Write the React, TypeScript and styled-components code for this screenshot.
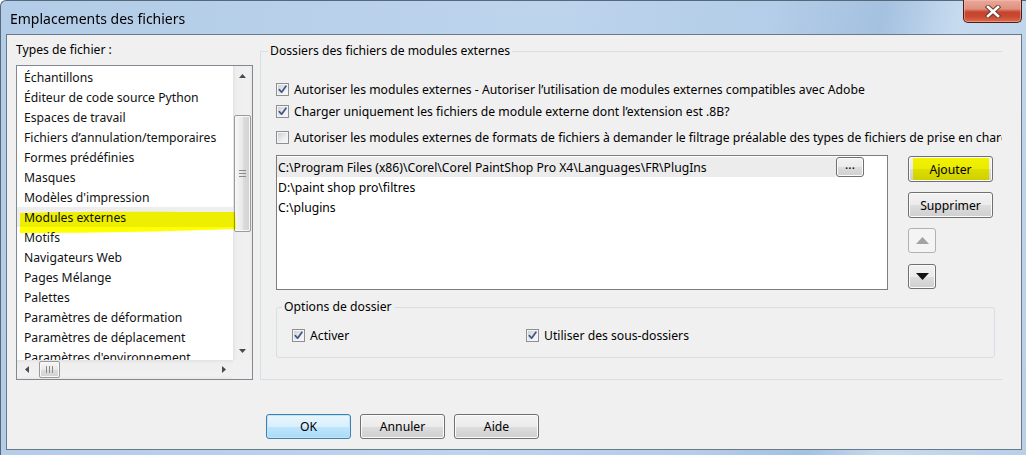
import React from "react";
import styled, { createGlobalStyle, css } from "styled-components";

const FONT = `"Noto Sans", "Liberation Sans", sans-serif`;

const GlobalStyle = createGlobalStyle`
  html, body { margin: 0; padding: 0; }
  body {
    width: 1026px; height: 455px; overflow: hidden;
    font-family: ${FONT}; font-size: 12.2px; color: #000;
  }
  * { box-sizing: border-box; }
`;

const Window = styled.div`
  width: 1026px;
  height: 455px;
  display: flex;
  flex-direction: column;
  border-left: 1px solid #56687c;
  border-top: 1px solid #56687c;
  border-top-left-radius: 6px;
  background: linear-gradient(100deg, #b3cce7 0%, #bcd4ec 50%, #b4cde8 70%, #a4c1e0 80%, #c7dbef 87%, #b7cfe9 100%);
`;

const TitleBar = styled.div`
  height: 33px;
  display: flex;
  align-items: flex-start;
  padding-left: 9px;
`;

const Title = styled.div`
  padding-top: 8px;
  font-size: 14px;
  line-height: 20px;
  color: #000;
`;

const CloseButton = styled.div`
  margin: -1px 4px 0 auto;
  width: 59px;
  height: 23px;
  border: 1px solid #4a1e16;
  border-top: none;
  border-radius: 0 0 5px 5px;
  background: linear-gradient(#eaa898 0%, #de9280 40%, #c8432d 55%, #c94a31 75%, #dc6c4c 100%);
  box-shadow: inset 0 0 0 1px rgba(255, 200, 190, 0.45);
  display: flex;
  align-items: center;
  justify-content: center;
`;

const Client = styled.div`
  flex: 1;
  margin: 0 4px 5px 5px;
  border: 1px solid #6b7888;
  background: #f0f0f0;
  display: flex;
  flex-direction: column;
`;

const TopRow = styled.div`
  display: flex;
  padding: 7px 0 0 9px;
`;

const LeftCol = styled.div`
  width: 237px;
  display: flex;
  flex-direction: column;
`;

const SectionLabel = styled.div`
  height: 16px;
  line-height: 16px;
  margin-bottom: 7px;
`;

const ListBox = styled.div`
  position: relative;
  height: 315px;
  border: 1px solid #828790;
  background: #fff;
  display: grid;
  grid-template-columns: 1fr 19px;
  grid-template-rows: 1fr 19px;
  overflow: hidden;
`;

const ItemList = styled.div`
  overflow: hidden;
  padding-top: 1px;
`;

const Item = styled.div<{ $selected?: boolean }>`
  height: 20px;
  line-height: 20px;
  padding: 1px 0 0 7px;
  white-space: nowrap;
  color: #111;
  background: ${(p) => (p.$selected ? "#eeeeee" : "transparent")};
`;

const Marker = styled.svg`
  position: absolute;
  left: 0;
  top: 0;
  width: 235px;
  height: 200px;
  mix-blend-mode: multiply;
  pointer-events: none;
`;

const VScroll = styled.div`
  grid-column: 2;
  grid-row: 1;
  display: flex;
  flex-direction: column;
  align-items: center;
  background: linear-gradient(90deg, #e2e2e2 0%, #eeeeee 15%, #f1f1f1 85%, #e8e8e8 100%);
`;

const HScroll = styled.div`
  grid-column: 1;
  grid-row: 2;
  display: flex;
  align-items: center;
  background: linear-gradient(#e2e2e2 0%, #eeeeee 15%, #f1f1f1 85%, #e8e8e8 100%);
`;

const Corner = styled.div`
  grid-column: 2;
  grid-row: 2;
  background: #f0f0f0;
`;

const ArrowCell = styled.div<{ $h?: boolean }>`
  ${(p) =>
    p.$h
      ? css`
          width: 19px;
          height: 100%;
        `
      : css`
          width: 100%;
          height: 19px;
        `}
  display: flex;
  align-items: center;
  justify-content: center;
  flex-shrink: 0;
`;

const VThumb = styled.div`
  margin-top: 30px;
  width: 17px;
  height: 117px;
  border: 1px solid #9a9a9a;
  border-radius: 2px;
  background: linear-gradient(90deg, #f6f6f6 0%, #e9e9e9 50%, #dcdcdc 51%, #d2d2d2 100%);
  box-shadow: inset 0 0 0 1px #f8f8f8;
  display: flex;
  align-items: center;
  justify-content: center;
`;

const HThumb = styled.div`
  margin-left: 3px;
  width: 21px;
  height: 17px;
  border: 1px solid #9a9a9a;
  border-radius: 2px;
  background: linear-gradient(#f6f6f6 0%, #e9e9e9 50%, #dcdcdc 51%, #d2d2d2 100%);
  box-shadow: inset 0 0 0 1px #f8f8f8;
  display: flex;
  align-items: center;
  justify-content: center;
`;

const Spacer = styled.div`
  flex: 1;
`;

const Group = styled.div<{ $w: number; $h: number }>`
  position: relative;
  width: ${(p) => p.$w}px;
  height: ${(p) => p.$h}px;
  border: 1px solid #d5dfe5;
`;

const MainGroup = styled(Group)`
  margin: 9px 0 0 7px;
  border-right: none;
  padding: 26px 0 0 15px;
`;

const OptionsGroup = styled(Group)`
  margin-top: 17px;
  border-radius: 3px;
  padding: 16px 0 0 15px;
  display: grid;
  grid-template-columns: 234px 1fr;
`;

const Legend = styled.span<{ $left: number }>`
  position: absolute;
  top: -9px;
  left: ${(p) => p.$left}px;
  padding: 0 2px;
  line-height: 16px;
  background: #f0f0f0;
  white-space: nowrap;
`;

const CheckRow = styled.label<{ $mt?: number }>`
  display: flex;
  align-items: center;
  gap: 5px;
  height: 22px;
  margin-top: ${(p) => p.$mt ?? 0}px;
  white-space: nowrap;
  overflow: hidden;
`;

const Box = styled.span`
  width: 13px;
  height: 13px;
  flex-shrink: 0;
  border: 1px solid #8e8f8f;
  background: linear-gradient(135deg, #c9ccd1 0%, #eceef0 60%, #fafafa 100%);
  box-shadow: inset 0 0 0 1px #f4f4f4;
  display: flex;
  align-items: center;
  justify-content: center;
`;

const PathArea = styled.div`
  display: flex;
  margin-top: 7px;
`;

const PathList = styled.div`
  width: 612px;
  height: 135px;
  border: 1px solid #7d7d7d;
  background: #fff;
  padding-top: 1px;
`;

const PathRow = styled.div`
  height: 20px;
  display: flex;
  align-items: center;
`;

const PathText = styled.div<{ $active?: boolean }>`
  flex: 1;
  height: 20px;
  line-height: 20px;
  padding: 1px 0 0 1px;
  white-space: nowrap;
  background: ${(p) => (p.$active ? "#ececec" : "transparent")};
`;

const btnBase = css`
  border: 1px solid #707070;
  border-radius: 3px;
  background: linear-gradient(#f2f2f2 0%, #ebebeb 50%, #dddddd 51%, #cfcfcf 100%);
  box-shadow: inset 0 0 0 1px #fbfbfb;
  font-family: ${FONT};
  font-size: 12.2px;
  color: #000;
  display: flex;
  align-items: center;
  justify-content: center;
  padding: 0;
`;

const SmallButton = styled.div`
  ${btnBase};
  width: 28px;
  height: 20px;
  margin-right: 23px;
  line-height: 1;
  padding-bottom: 4px;
`;

const SideCol = styled.div`
  display: flex;
  flex-direction: column;
  margin-left: 20px;
  padding-top: 1px;
`;

const PushButton = styled.div<{ $marker?: boolean; $default?: boolean; $mt?: number }>`
  ${btnBase};
  width: 85px;
  height: 26px;
  margin-top: ${(p) => p.$mt ?? 0}px;
  ${(p) =>
    p.$marker &&
    css`
      background: linear-gradient(90deg, transparent 4px, #ffff00 4px, #ffff00 calc(100% - 3px), transparent calc(100% - 3px)),
        linear-gradient(#f2f2f2 0%, #ebebeb 50%, #dddddd 51%, #cfcfcf 100%);
      background-blend-mode: multiply;
    `}
  ${(p) =>
    p.$default &&
    css`
      border-color: #3c7fb1;
      background: linear-gradient(#e8f5fc 0%, #d9f0fc 50%, #bee6fd 51%, #a9daf6 100%);
      box-shadow: inset 0 0 0 1px #c4e5f7;
    `}
`;

const ArrowButton = styled.div<{ $disabled?: boolean; $mt: number }>`
  ${btnBase};
  width: 28px;
  height: 25px;
  margin-top: ${(p) => p.$mt}px;
  ${(p) =>
    p.$disabled &&
    css`
      border-color: #adb2b5;
      background: #f4f4f4;
      box-shadow: none;
    `}
`;

const ButtonRow = styled.div`
  margin-top: auto;
  display: flex;
  gap: 9px;
  padding: 0 0 10px 259px;
  & > div {
    height: 25px;
  }
`;

const Check = ({ checked }: { checked: boolean }) => (
  <Box>
    {checked && (
      <svg width="9" height="9" viewBox="0 0 9 9">
        <path d="M1.3 4.6 L3.6 7.2 L7.9 1.2" fill="none" stroke="#42538a" strokeWidth="1.7" strokeLinecap="round" strokeLinejoin="round" />
      </svg>
    )}
  </Box>
);

const Tri = ({ dir, color = "#4a4a4a", w = 7, h = 4 }: { dir: "up" | "down" | "left" | "right"; color?: string; w?: number; h?: number }) => {
  const pts =
    dir === "up"
      ? `0,${h} ${w},${h} ${w / 2},0`
      : dir === "down"
      ? `0,0 ${w},0 ${w / 2},${h}`
      : dir === "left"
      ? `${h},0 ${h},${w} 0,${w / 2}`
      : `0,0 0,${w} ${h},${w / 2}`;
  const vw = dir === "up" || dir === "down" ? w : h;
  const vh = dir === "up" || dir === "down" ? h : w;
  return (
    <svg width={vw} height={vh} viewBox={`0 0 ${vw} ${vh}`}>
      <polygon points={pts} fill={color} />
    </svg>
  );
};

const fileTypes = [
  "Échantillons",
  "Éditeur de code source Python",
  "Espaces de travail",
  "Fichiers d’annulation/temporaires",
  "Formes prédéfinies",
  "Masques",
  "Modèles d'impression",
  "Modules externes",
  "Motifs",
  "Navigateurs Web",
  "Pages Mélange",
  "Palettes",
  "Paramètres de déformation",
  "Paramètres de déplacement",
  "Paramètres d'environnement",
];

const paths = [
  "C:\\Program Files (x86)\\Corel\\Corel PaintShop Pro X4\\Languages\\FR\\PlugIns",
  "D:\\paint shop pro\\filtres",
  "C:\\plugins",
];

export default function App() {
  return (
    <>
      <GlobalStyle />
      <Window>
        <TitleBar>
          <Title>Emplacements des fichiers</Title>
          <CloseButton>
            <svg width="18" height="13" viewBox="0 0 18 13">
              <path d="M4 2 L14 11 M14 2 L4 11" stroke="#6a3a30" strokeWidth="4.4" strokeLinecap="square" />
              <path d="M4 2 L14 11 M14 2 L4 11" stroke="#ffffff" strokeWidth="2.6" strokeLinecap="square" />
            </svg>
          </CloseButton>
        </TitleBar>
        <Client>
          <TopRow>
            <LeftCol>
              <SectionLabel>Types de fichier :</SectionLabel>
              <ListBox>
                <ItemList>
                  {fileTypes.map((t) => (
                    <Item key={t} $selected={t === "Modules externes"}>
                      {t}
                    </Item>
                  ))}
                </ItemList>
                <VScroll>
                  <ArrowCell>
                    <Tri dir="up" />
                  </ArrowCell>
                  <VThumb>
                    <svg width="7" height="7" viewBox="0 0 7 7">
                      <path d="M0 0.5 H7 M0 3.5 H7 M0 6.5 H7" stroke="#8a8a8a" strokeWidth="1" />
                    </svg>
                  </VThumb>
                  <Spacer />
                  <ArrowCell>
                    <Tri dir="down" />
                  </ArrowCell>
                </VScroll>
                <HScroll>
                  <ArrowCell $h>
                    <Tri dir="left" />
                  </ArrowCell>
                  <HThumb>
                    <svg width="7" height="7" viewBox="0 0 7 7">
                      <path d="M0.5 0 V7 M3.5 0 V7 M6.5 0 V7" stroke="#8a8a8a" strokeWidth="1" />
                    </svg>
                  </HThumb>
                  <Spacer />
                  <ArrowCell $h>
                    <Tri dir="right" />
                  </ArrowCell>
                </HScroll>
                <Corner />
                <Marker viewBox="0 0 235 200">
                  <path
                    d="M3 147 C60 145 150 146 218 146 L219 163 C160 165 90 167 3 167 Z"
                    fill="#ffff00"
                  />
                </Marker>
              </ListBox>
            </LeftCol>
            <MainGroup $w={742} $h={329}>
              <Legend $left={7}>Dossiers des fichiers de modules externes</Legend>
              <CheckRow>
                <Check checked />
                Autoriser les modules externes - Autoriser l’utilisation de modules externes compatibles avec Adobe
              </CheckRow>
              <CheckRow>
                <Check checked />
                Charger uniquement les fichiers de module externe dont l’extension est .8B?
              </CheckRow>
              <CheckRow $mt={4}>
                <Check checked={false} />
                Autoriser les modules externes de formats de fichiers à demander le filtrage préalable des types de fichiers de prise en charge
              </CheckRow>
              <PathArea>
                <PathList>
                  {paths.map((p, i) => (
                    <PathRow key={p}>
                      <PathText $active={i === 0}>{p}</PathText>
                      {i === 0 && <SmallButton>...</SmallButton>}
                    </PathRow>
                  ))}
                </PathList>
                <SideCol>
                  <PushButton $marker>Ajouter</PushButton>
                  <PushButton $mt={10}>Supprimer</PushButton>
                  <ArrowButton $disabled $mt={10}>
                    <Tri dir="up" color="#a3a3a3" w={13} h={7} />
                  </ArrowButton>
                  <ArrowButton $mt={11}>
                    <Tri dir="down" color="#111" w={13} h={7} />
                  </ArrowButton>
                </SideCol>
              </PathArea>
              <OptionsGroup $w={719} $h={51}>
                <Legend $left={5}>Options de dossier</Legend>
                <CheckRow>
                  <Check checked />
                  Activer
                </CheckRow>
                <CheckRow>
                  <Check checked />
                  Utiliser des sous-dossiers
                </CheckRow>
              </OptionsGroup>
            </MainGroup>
          </TopRow>
          <ButtonRow>
            <PushButton $default>OK</PushButton>
            <PushButton>Annuler</PushButton>
            <PushButton>Aide</PushButton>
          </ButtonRow>
        </Client>
      </Window>
    </>
  );
}
